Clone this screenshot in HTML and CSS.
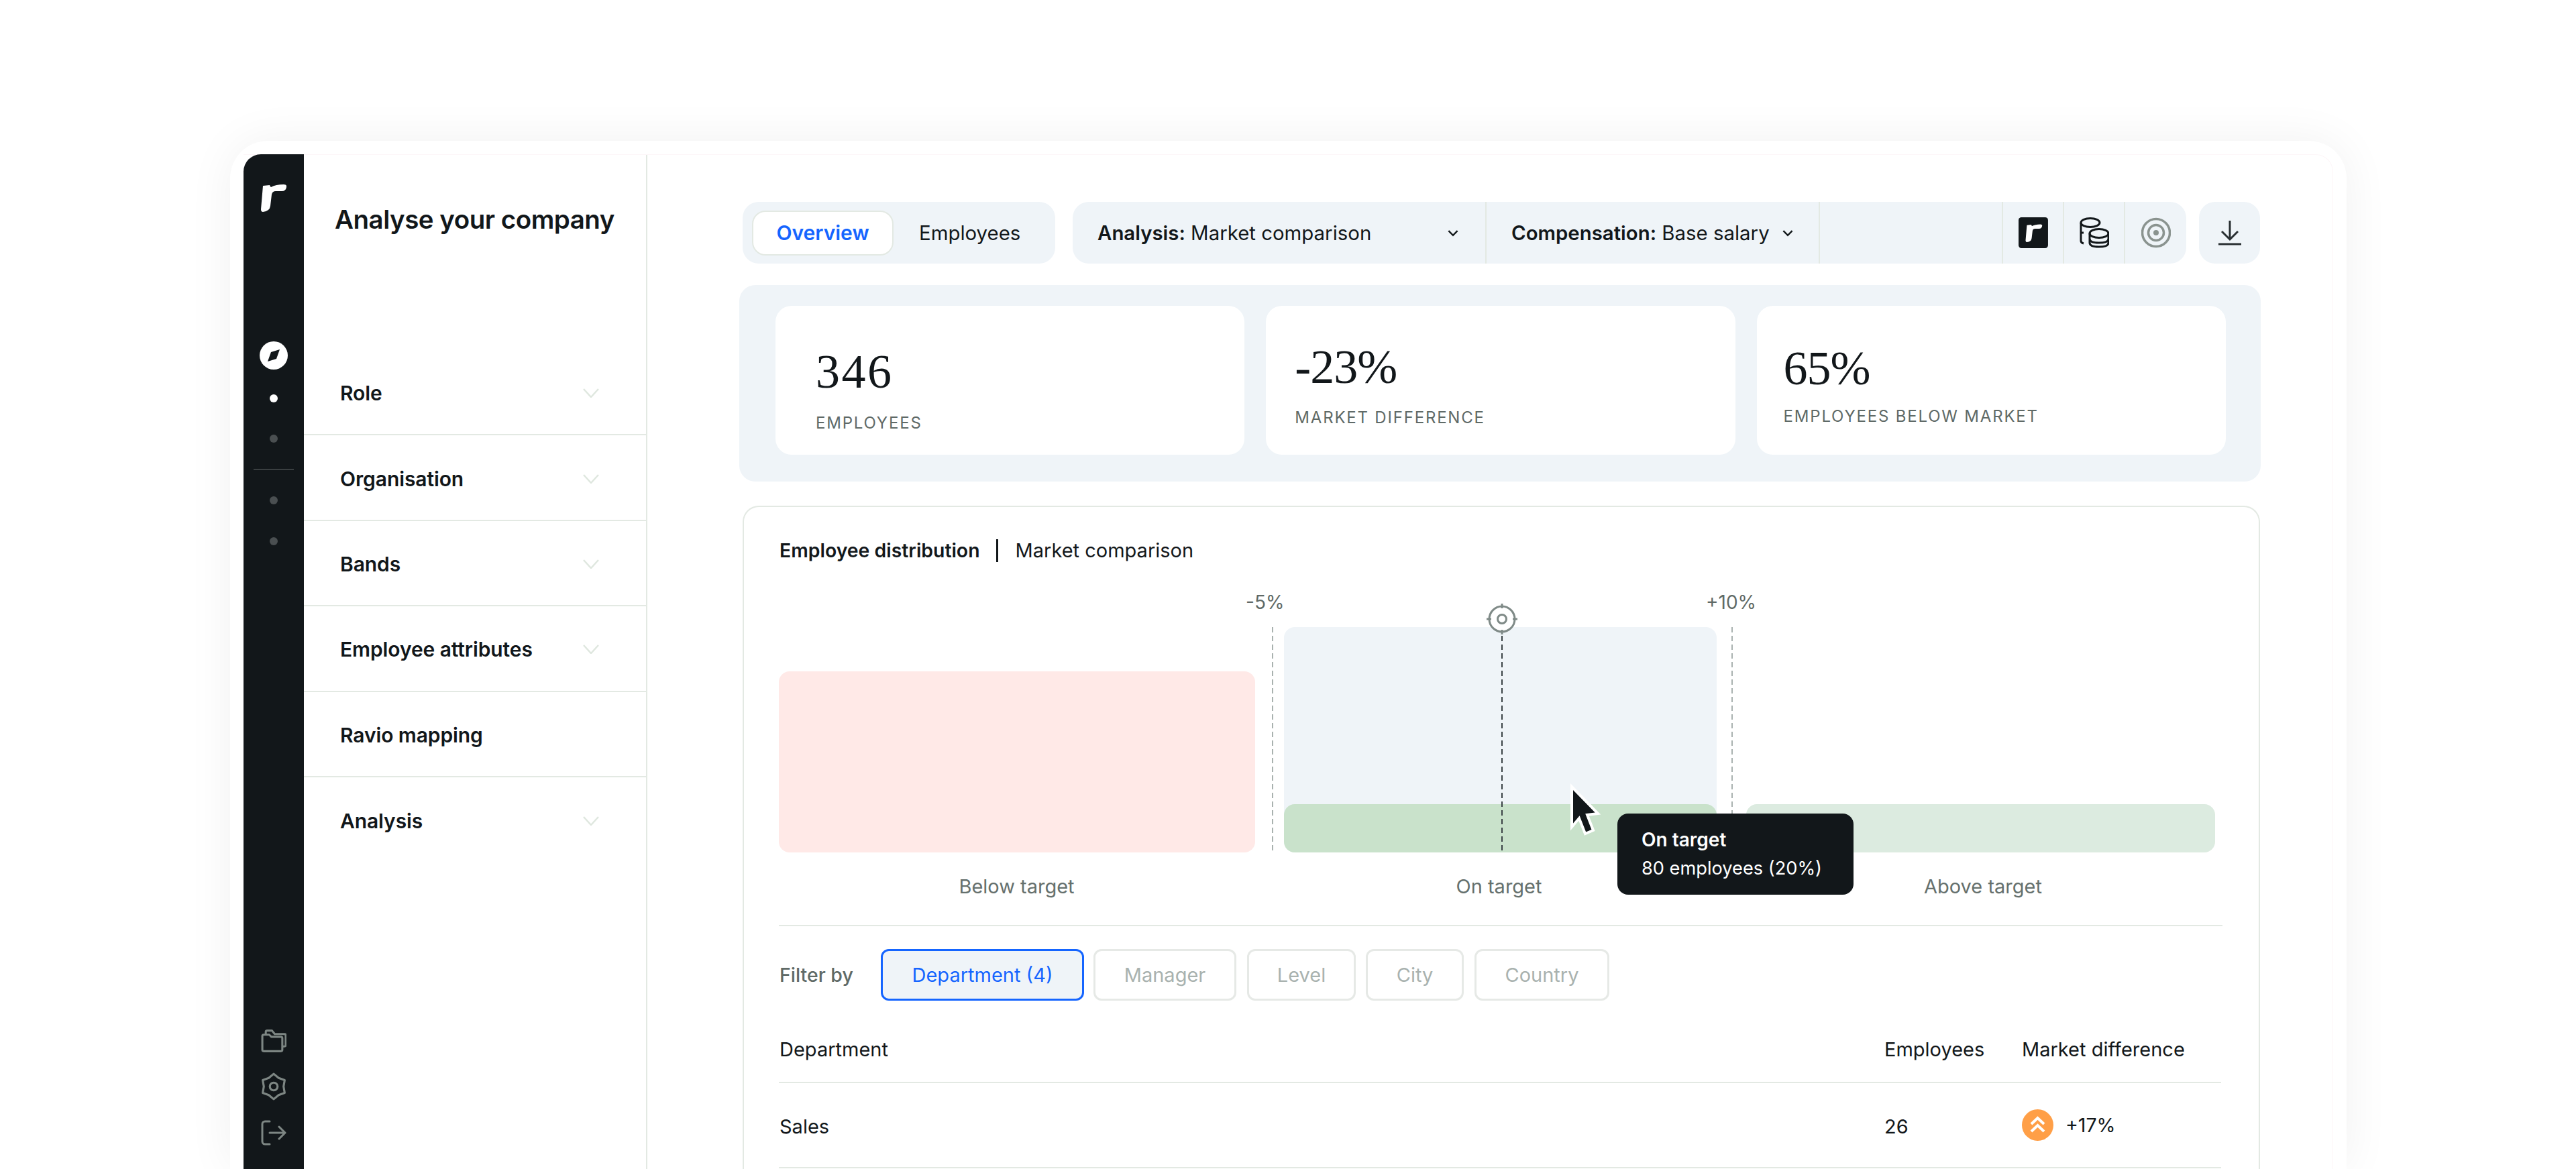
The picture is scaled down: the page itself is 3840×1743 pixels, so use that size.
FILE: index.html
```html
<!DOCTYPE html>
<html lang="en">
<head>
<meta charset="utf-8">
<title>Analyse your company</title>
<link rel="stylesheet" href="styles.css">
</head>
<body>
<div class="stage">
  <div class="shell">
    <div class="frame">
      <aside class="rail">
        <svg class="logo" viewBox="0 0 38 41"><path d="M3 2L13 1Q14 4 15 4Q22 0 34 0Q39 0 38 4Q37 10 31 10L22 10Q17 10 16 15L14 32Q13 40 3 41Q0 41 0 37Z"/></svg>
        <svg class="compass" viewBox="0 0 42 42"><circle cx="21" cy="21" r="21" fill="#fff"/><path d="M30 12L25 26L12 30L17 16Z" fill="#12171a"/></svg>
        <span class="dot dot-on"></span>
        <span class="dot dot-a"></span>
        <span class="rail-line"></span>
        <span class="dot dot-b"></span>
        <span class="dot dot-c"></span>
        <div class="rail-tools">
          <svg class="tool-folder" viewBox="0 0 37 34"><path d="M2 10a2 2 0 0 1 2-2h8l3 3h14a2 2 0 0 1 2 2v17a2 2 0 0 1-2 2H4a2 2 0 0 1-2-2Z M7 8V4a2 2 0 0 1 2-2h7l4 5h14a2 2 0 0 1 2 2v14a2 2 0 0 1-2 2h-3"/></svg>
          <svg class="tool-gear" viewBox="0 0 40 40"><path d="M20 2L27 7.900L35.600 11L34 20L35.600 29L27 32.100L20 38L13 32.100L4.400 29L6 20L4.400 11L13 7.900Z"/><circle cx="20" cy="20" r="5.500"/></svg>
          <svg class="tool-exit" viewBox="0 0 38 38"><path d="M13 2H6a4 4 0 0 0-4 4v26a4 4 0 0 0 4 4h7M13 19H36M27 10L36 19L27 28"/></svg>
        </div>
      </aside>
      <nav class="sidebar">
        <h1 class="side-title">Analyse your company</h1>
        <ul class="side-list">
          <li class="side-item">Role<svg class="side-chev" viewBox="0 0 24 14"><path d="M1 1L12 13L23 1"/></svg></li>
          <li class="side-item">Organisation<svg class="side-chev" viewBox="0 0 24 14"><path d="M1 1L12 13L23 1"/></svg></li>
          <li class="side-item">Bands<svg class="side-chev" viewBox="0 0 24 14"><path d="M1 1L12 13L23 1"/></svg></li>
          <li class="side-item">Employee attributes<svg class="side-chev" viewBox="0 0 24 14"><path d="M1 1L12 13L23 1"/></svg></li>
          <li class="side-item">Ravio mapping</li>
          <li class="side-item side-last">Analysis<svg class="side-chev" viewBox="0 0 24 14"><path d="M1 1L12 13L23 1"/></svg></li>
        </ul>
      </nav>
      <main class="main">
        <div class="toolbar">
          <div class="tabs">
            <span class="tab tab-on">Overview</span>
            <span class="tab tab-off">Employees</span>
          </div>
          <div class="filters">
            <div class="seg seg-a"><span><b>Analysis:</b> Market comparison</span><svg class="mini" viewBox="0 0 14 10"><path d="M1 2L7 8L13 2"/></svg></div>
            <div class="seg seg-b"><span><b>Compensation:</b> Base salary</span><svg class="mini" viewBox="0 0 14 10"><path d="M1 2L7 8L13 2"/></svg></div>
            <div class="seg seg-gap"></div>
            <div class="seg seg-i">
              <svg class="ic" viewBox="0 0 42 44"><rect width="42" height="44" rx="4" fill="#12171a"/><path transform="translate(10 10) scale(.62)" fill="#fff" d="M3 2L13 1Q14 4 15 4Q22 0 34 0Q39 0 38 4Q37 10 31 10L22 10Q17 10 16 15L14 32Q13 40 3 41Q0 41 0 37Z"/></svg>
            </div>
            <div class="seg seg-i">
              <svg class="ic coins" viewBox="0 0 44 46"><ellipse cx="16" cy="8" rx="14" ry="6.500"/><path d="M2 8V35Q2 38 6 39M2 23H6"/><ellipse cx="29" cy="24" rx="14" ry="6.500"/><path d="M15 24V38Q15 44 29 44Q43 44 43 38V24M15 32Q15 38 29 38Q43 38 43 32"/></svg>
            </div>
            <div class="seg seg-i seg-end">
              <svg class="ic target" viewBox="0 0 44 44"><circle cx="22" cy="22" r="20.500"/><circle cx="22" cy="22" r="11.500"/><circle class="target-c" cx="22" cy="22" r="4"/></svg>
            </div>
          </div>
          <div class="download">
            <svg viewBox="0 0 36 38"><path d="M18 1V29M6 17L18 29L30 17M1 36H35"/></svg>
          </div>
        </div>

        <section class="stats">
          <div class="stat stat-a"><div class="num">346</div><div class="cap">EMPLOYEES</div></div>
          <div class="stat stat-b"><div class="num">-23%</div><div class="cap">MARKET DIFFERENCE</div></div>
          <div class="stat stat-c"><div class="num">65%</div><div class="cap">EMPLOYEES BELOW MARKET</div></div>
        </section>

        <section class="board">
          <h2 class="board-title"><b>Employee distribution</b><i class="pipe"></i><span>Market comparison</span></h2>
          <div class="chart">
            <span class="mark mark-l">-5%</span>
            <span class="mark mark-r">+10%</span>
            <span class="dash dash-l"></span>
            <span class="dash dash-r"></span>
            <div class="col col-below"><div class="bar bar-pink"></div></div>
            <div class="col col-on"><div class="bar bar-blue"><div class="bar-green"></div></div></div>
            <div class="col col-above"><div class="bar bar-mint"></div></div>
            <span class="dash dash-c"></span>
            <svg class="aim" viewBox="0 0 48 48"><circle cx="24" cy="24" r="19"/><circle cx="24" cy="24" r="6.500"/><path d="M24 1V8M24 40V47M1 24H8M40 24H47"/></svg>
            <svg class="cursor" viewBox="0 0 50 82"><path d="M6 5L45 45L29 47L38 70L26 75L17 52L6 65Z"/></svg>
            <div class="tip"><strong>On target</strong><span>80 employees (20%)</span></div>
          </div>
          <div class="legend">
            <span class="leg-a">Below target</span>
            <span class="leg-b">On target</span>
            <span class="leg-c">Above target</span>
          </div>
          <div class="filter-row">
            <span class="filter-by">Filter by</span>
            <span class="chip chip-on chip-1">Department (4)</span>
            <span class="chip chip-2">Manager</span>
            <span class="chip chip-3">Level</span>
            <span class="chip chip-4">City</span>
            <span class="chip chip-5">Country</span>
          </div>
          <div class="row row-head">
            <span class="c-1">Department</span><span class="c-2">Employees</span><span class="c-3">Market difference</span>
          </div>
          <div class="row row-body">
            <span class="c-1 low">Sales</span><span class="c-2 low">26</span>
            <span class="c-3 diff"><svg class="badge" viewBox="0 0 47 47"><circle cx="23.500" cy="23.500" r="23.500"/><path d="M14 22L23.500 13L33 22M14 33L23.500 24L33 33"/></svg>+17%</span>
          </div>
        </section>
      </main>
    </div>
  </div>
</div>
</body>
</html>
```

FILE: styles.css
```css
* { box-sizing: border-box; }
html, body { margin: 0; padding: 0; background: #fff; overflow: hidden; }
body { width: 3840px; height: 1743px; font-family: Inter, "Liberation Sans", sans-serif; color: #12171a; }
.stage { height: 1743px; padding: 210px 0 0 343px; overflow: hidden; }
.shell { width: 3155px; height: 1533px; padding: 20px 20px 0; background: #fff; border-radius: 56px 56px 0 0; box-shadow: 0 0 70px rgba(20, 30, 30, .06); }
.frame { display: flex; width: 3115px; height: 1513px; border-top: 1px solid #fdf6f8; border-right: 1px solid #fdf6f8; border-radius: 0 26px 0 0; }

.rail { flex: none; width: 90px; margin-top: -1px; background: #12171a; border-radius: 26px 0 0 0; display: flex; flex-direction: column; align-items: center; }
.logo { width: 38px; height: 41px; margin-top: 45px; fill: #fff; }
.compass { width: 42px; height: 42px; margin-top: 193px; }
.dot { width: 12px; height: 12px; border-radius: 50%; background: #4a4f51; flex: none; }
.dot-on { background: #fff; margin-top: 37px; }
.dot-a { margin-top: 48px; }
.rail-line { width: 60px; height: 2px; background: #3a3f41; margin-top: 39px; }
.dot-b { margin-top: 39px; }
.dot-c { margin-top: 49px; }
.rail-tools { display: flex; flex-direction: column; align-items: center; gap: 29px; margin-top: 721px; }
.rail-tools svg { fill: none; stroke: #7d8683; stroke-width: 3; stroke-linejoin: round; stroke-linecap: round; }
.tool-folder { width: 38px; height: 36px; }
.tool-gear { width: 42px; height: 42px; }
.tool-exit { width: 38px; height: 38px; }

.sidebar { flex: none; width: 512px; border-right: 2px solid #e3e9e3; }
.side-title { margin: 0; padding: 71px 0 0 46px; font-size: 38.500px; line-height: 50px; font-weight: 600; letter-spacing: -.5px; white-space: nowrap; }
.side-list { list-style: none; margin: 170px 0 0; padding: 0; }
.side-item { display: flex; align-items: center; justify-content: space-between; height: 127.400px; padding: 3px 70px 0 54px; font-size: 30px; letter-spacing: -.1px; font-weight: 600; border-bottom: 2px solid #e3e9e3; }
.side-last { border-bottom: 0; }
.side-chev { width: 24px; height: 14px; fill: none; stroke: #dfe7df; stroke-width: 2.500; }

.main { flex: none; width: 2512px; padding: 70px 0 0 137px; }
.toolbar { display: flex; margin-left: 5px; height: 92px; }
.tabs { display: flex; align-items: center; width: 466px; padding: 0 14px; background: #eff4f8; border-radius: 24px; font-size: 29.400px; }
.tab { display: flex; align-items: center; height: 67px; white-space: nowrap; }
.tab-on { justify-content: center; width: 211px; background: #fff; color: #1565ff; font-weight: 600; font-size: 30px; border: 2px solid #e3e9e3; border-radius: 20px; }
.tab-off { margin-left: 38px; }
.filters { display: flex; width: 1660px; margin-left: 26px; background: #eff4f8; border-radius: 24px; font-size: 29.400px; }
.filters b { font-weight: 600; }
.seg { display: flex; align-items: center; border-right: 2px solid #e3e9e3; white-space: nowrap; }
.seg-a { width: 617px; padding: 0 40px 0 37px; justify-content: space-between; }
.seg-b { width: 497px; padding: 0 38px 0 37px; justify-content: space-between; }
.seg-gap { width: 273px; }
.seg-i { width: 91px; justify-content: center; }
.seg-end { border-right: 0; flex: 1; }
.mini { width: 16px; height: 11px; fill: none; stroke: #12171a; stroke-width: 2.200; }
.ic { width: 44px; height: 46px; }
.coins { fill: none; stroke: #12171a; stroke-width: 3; }
.target { fill: none; stroke: #8a938f; stroke-width: 3.500; }
.target-c { fill: #8a938f; stroke: none; }
.download { display: flex; align-items: center; justify-content: center; width: 91px; margin-left: 19px; background: #eff4f8; border-radius: 24px; }
.download svg { width: 36px; height: 38px; fill: none; stroke: #2a3033; stroke-width: 3; }

.stats { display: flex; gap: 32px; width: 2268px; height: 293px; margin-top: 32px; padding: 31px 52px 40px 54px; background: #eff4f8; border-radius: 24px; }
.stat { flex: none; width: 699.300px; background: #fff; border-radius: 24px; }
.stat-a { padding: 54px 0 0 60px; }
.stat-b { padding: 47px 0 0 43px; }
.stat-c { padding: 49px 0 0 40px; }
.num { font-family: "Liberation Serif", serif; font-size: 72px; line-height: 88px; letter-spacing: 2.500px; white-space: nowrap; }
.stat-b .num, .stat-c .num { letter-spacing: -1px; }
.cap { margin-top: 18px; font-size: 24px; line-height: 30px; letter-spacing: 1.800px; color: #5f6a67; white-space: nowrap; }
.stat-b .cap { margin-top: 17px; }
.stat-c .cap { margin-top: 13px; }

.board { width: 2262px; height: 990px; margin: 36px 0 0 5px; padding: 45px 54px 0 53px; border: 2px solid #e3e9e3; border-bottom: 0; border-radius: 24px 24px 0 0; overflow: hidden; }
.board-title { display: flex; align-items: center; margin: 0; font-size: 29px; line-height: 40px; font-weight: 400; white-space: nowrap; }
.board-title b { font-weight: 600; font-size: 28.400px; }
.pipe { width: 3px; height: 34px; margin: 0 26px 0 24px; background: #12171a; }

.chart { position: relative; display: flex; align-items: flex-end; height: 336px; margin: 94px 0 0 -1px; }
.col { flex: none; height: 100%; display: flex; align-items: flex-end; }
.col-below { width: 710px; }
.col-on { width: 645px; margin-left: 43px; }
.col-above { width: 699px; margin-left: 44px; }
.bar { width: 100%; border-radius: 16px; }
.bar-pink { height: 270px; background: #ffe9e7; }
.bar-blue { height: 336px; background: #eff4f8; display: flex; align-items: flex-end; }
.bar-green { width: 100%; height: 72px; background: #c9e2cb; border-radius: 16px; }
.bar-mint { height: 72px; background: #dcebe0; }
.mark { position: absolute; top: -49px; font-size: 28px; line-height: 24px; color: #5f6a67; white-space: nowrap; }
.mark-l { left: 696px; }
.mark-r { left: 1382px; }
.dash { position: absolute; width: 2px; background: repeating-linear-gradient(to bottom, #a9b2af 0 8px, transparent 8px 13px); }
.dash-l { left: 735px; top: 0; height: 338px; }
.dash-r { left: 1420px; top: 0; height: 280px; }
.dash-c { left: 1077px; top: 0; height: 338px; background: repeating-linear-gradient(to bottom, #3a4245 0 8px, transparent 8px 13px); }
.aim { position: absolute; left: 1054px; top: -36px; width: 48px; height: 48px; fill: #fff; stroke: #7f8a87; stroke-width: 3; }
.cursor { position: absolute; left: 1176px; top: 231px; width: 50px; height: 86px; fill: #12171a; stroke: #fff; stroke-width: 4; }
.tip { position: absolute; left: 1250px; top: 278px; display: flex; flex-direction: column; justify-content: center; gap: 11px; width: 352px; height: 121px; padding-left: 36px; background: #12171a; border-radius: 16px; color: #fff; font-size: 27.200px; line-height: 31px; white-space: nowrap; }
.tip strong { font-weight: 600; font-size: 28px; }

.legend { display: flex; height: 110px; margin-left: -1px; padding-top: 31px; border-bottom: 2px solid #e3e9e3; font-size: 29px; line-height: 40px; color: #65706d; text-align: center; white-space: nowrap; }
.leg-a { width: 709px; }
.leg-b { width: 645px; margin-left: 42px; }
.leg-c { width: 699px; margin-left: 45px; padding-left: 9px; }

.filter-row { display: flex; align-items: center; height: 77px; margin-top: 34px; font-size: 29px; white-space: nowrap; }
.filter-by { width: 151px; color: #5f6a67; font-weight: 500; font-size: 28.500px; }
.chip { display: flex; align-items: center; justify-content: center; height: 77px; border: 3px solid #e6e9e6; border-radius: 12px; color: #a9b2af; }
.chip-on { border-color: #1565ff; background: #eff4f8; color: #1565ff; }
.chip-1 { width: 303px; }
.chip-2 { width: 213px; margin-left: 14px; }
.chip-3 { width: 162px; margin-left: 16px; }
.chip-4 { width: 146px; margin-left: 15px; }
.chip-5 { width: 201px; margin-left: 16px; }

.row { display: flex; width: 2150px; margin-left: -1px; border-bottom: 2px solid #e3e9e3; font-size: 29px; white-space: nowrap; }
.row-head { height: 79px; margin-top: 44px; padding-top: 11px; }
.row-body { height: 127px; align-items: center; }
.row .c-1 { width: 1648px; padding-left: 1px; }
.c-2 { width: 205px; }
.c-3 { width: 297px; }
.low { padding-top: 3px; }
.diff { display: flex; align-items: center; gap: 18px; font-size: 28.500px; }
.badge { width: 47px; height: 47px; fill: #ff9f47; stroke: none; }
.badge path { fill: none; stroke: #fff; stroke-width: 4; }
```
